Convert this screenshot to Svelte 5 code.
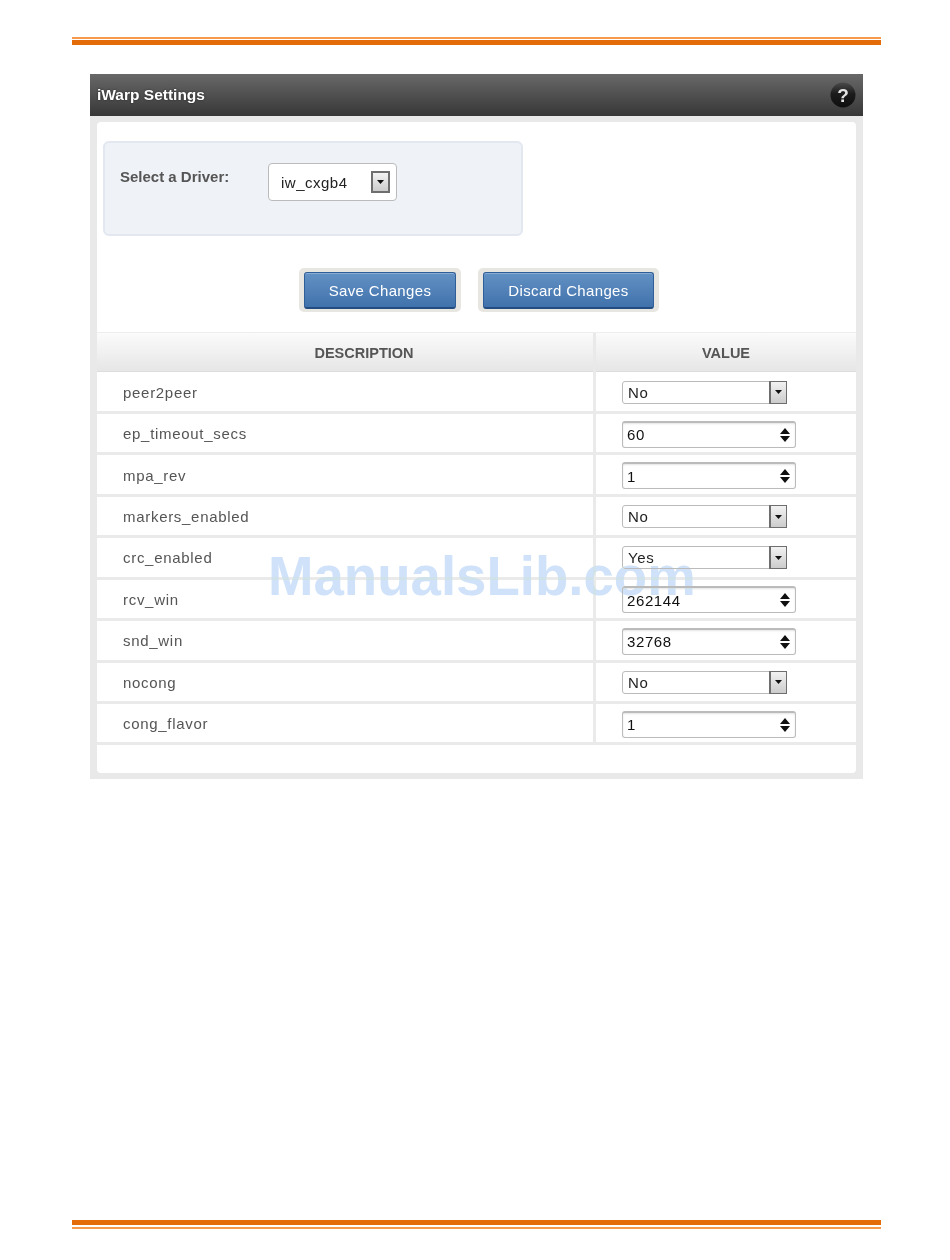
<script>
  const rows = [
    { name: 'peer2peer', kind: 'select', value: 'No' },
    { name: 'ep_timeout_secs', kind: 'number', value: '60' },
    { name: 'mpa_rev', kind: 'number', value: '1' },
    { name: 'markers_enabled', kind: 'select', value: 'No' },
    { name: 'crc_enabled', kind: 'select', value: 'Yes' },
    { name: 'rcv_win', kind: 'number', value: '262144' },
    { name: 'snd_win', kind: 'number', value: '32768' },
    { name: 'nocong', kind: 'select', value: 'No' },
    { name: 'cong_flavor', kind: 'number', value: '1' }
  ];
</script>

<div class="page">
  <div class="bar-top"><div class="thin"></div><div class="thick"></div></div>

  <section class="panel">
    <header class="head">
      <h1>iWarp Settings</h1>
      <svg class="help" width="26" height="26" viewBox="0 0 26 26" aria-label="Help">
        <defs>
          <linearGradient id="helpfill" x1="0" y1="0" x2="0" y2="1">
            <stop offset="0" stop-color="#4a4a4a" />
            <stop offset="0.45" stop-color="#1c1c1c" />
            <stop offset="1" stop-color="#0e0e0e" />
          </linearGradient>
        </defs>
        <circle cx="13" cy="13" r="12.5" fill="url(#helpfill)" />
        <text x="13" y="20" text-anchor="middle" class="q">?</text>
      </svg>
    </header>

    <div class="inner">
      <div class="driver">
        <span class="driver-label">Select a Driver:</span>
        <div class="driver-select">
          <span>iw_cxgb4</span>
          <span class="drop big"><svg width="7" height="4" viewBox="0 0 7 4"><path d="M0 0h7L3.5 4z" fill="#111" /></svg></span>
        </div>
      </div>

      <div class="actions">
        <div class="btn-wrap"><button class="btn save">Save Changes</button></div>
        <div class="btn-wrap"><button class="btn discard">Discard Changes</button></div>
      </div>

      <div class="thead">
        <div class="th desc">DESCRIPTION</div>
        <div class="th val">VALUE</div>
      </div>

      {#each rows as r}
        <div class="row">
          <div class="name">{r.name}</div>
          <div class="cell">
            {#if r.kind === 'select'}
              <div class="sel">
                <span>{r.value}</span>
                <span class="drop"><svg width="7" height="4" viewBox="0 0 7 4"><path d="M0 0h7L3.5 4z" fill="#111" /></svg></span>
              </div>
            {:else}
              <div class="num">
                <span>{r.value}</span>
                <svg width="10" height="14" viewBox="0 0 10 14"><path d="M5 0l5 6H0zM0 8h10l-5 6z" fill="#111" /></svg>
              </div>
            {/if}
          </div>
        </div>
      {/each}
    </div>
  </section>

  <div class="spacer"></div>
  <div class="bar-bottom"><div class="thick"></div><div class="thin"></div></div>

  <div class="watermark">ManualsLib.com</div>
</div>

<style>
  :global(body) { margin: 0; background: #fff; }
  .page {
    position: relative;
    box-sizing: border-box;
    width: 950px;
    height: 1260px;
    padding: 37px 69px 31px 72px;
    display: flex;
    flex-direction: column;
    font-family: "Liberation Sans", Arial, sans-serif;
  }
  .thin { height: 2px; background: #f59a4a; }
  .thick { height: 5px; background: #e36c09; }
  .bar-top .thin { margin-bottom: 1px; }
  .bar-bottom .thin { margin-top: 2px; }
  .spacer { flex: 1; }

  .panel {
    margin: 29px 18px 0;
    background: #e9e9e9;
    padding-bottom: 6px;
  }
  .head {
    height: 42px;
    background: linear-gradient(#686868, #373737);
    display: flex;
    align-items: center;
    justify-content: space-between;
    padding: 0 7px;
  }
  h1 {
    margin: 0;
    font-size: 15.5px;
    font-weight: 700;
    color: #fff;
    text-shadow: 0 0 2px #222;
  }
  .help { margin-top: -1px; }
  .q { font: 700 19px "Liberation Sans", sans-serif; fill: #e4e4e4; }

  .inner {
    margin: 6px 7px 0;
    background: #fff;
    border-radius: 4px;
    height: 651px;
    padding-top: 19px;
    box-sizing: border-box;
  }
  .driver {
    box-sizing: border-box;
    width: 420px;
    height: 95px;
    margin-left: 6px;
    background: #eff2f7;
    border: 2px solid #e2e7f0;
    border-radius: 6px;
    display: flex;
    align-items: flex-start;
    padding: 20px 0 0 15px;
  }
  .driver-label {
    width: 148px;
    font-size: 15px;
    font-weight: 700;
    color: #555;
    line-height: 28px;
  }
  .driver-select {
    box-sizing: border-box;
    width: 129px;
    height: 38px;
    background: #fff;
    border: 1px solid #bbb;
    border-radius: 4px;
    display: flex;
    align-items: center;
    justify-content: space-between;
    padding: 0 6px 0 12px;
    font-size: 15px;
    letter-spacing: 0.5px;
    color: #222;
  }
  .drop {
    box-sizing: border-box;
    width: 19px;
    height: 22px;
    background: linear-gradient(#f2f2f2, #ccc);
    border: 2px solid #6e6e6e;
    display: flex;
    align-items: center;
    justify-content: center;
  }

  .actions {
    display: flex;
    justify-content: center;
    gap: 17px;
    padding-left: 5px;
    margin-top: 32px;
  }
  .btn-wrap {
    background: #e8e6e1;
    border-radius: 5px;
    padding: 4px 5px 3px;
  }
  .btn {
    display: block;
    height: 37px;
    border: 1px solid #2f5f99;
    border-bottom: 2px solid #234c80;
    border-radius: 3px;
    background: linear-gradient(#6291c4, #4172ab);
    box-shadow: inset 0 1px 0 rgba(255, 255, 255, 0.25);
    color: #fff;
    font: 15px "Liberation Sans", sans-serif;
    letter-spacing: 0.35px;
    padding: 1px 0 0;
  }
  .save { width: 152px; }
  .discard { width: 171px; }

  .thead {
    display: grid;
    grid-template-columns: 496px 3px 1fr;
    height: 40px;
    margin: 20px 0 0.5px;
    box-sizing: border-box;
    background: linear-gradient(#fbfbfb, #e6e6e6);
    border-top: 1px solid #eee;
    border-bottom: 1px solid #ddd;
  }
  .th {
    font-size: 14.5px;
    font-weight: 700;
    color: #555;
    line-height: 40px;
    text-align: center;
  }
  .desc { grid-column: 1; padding-left: 38px; }
  .val { grid-column: 3; box-shadow: -3px 0 0 #e9e9e9; }

  .row {
    display: grid;
    grid-template-columns: 496px 1fr;
    height: 41.44px;
    box-sizing: border-box;
    border-bottom: 3px solid #eaeaea;
    align-items: center;
  }
  .name {
    padding-left: 26px;
    font-size: 15px;
    letter-spacing: 0.7px;
    color: #555;
    padding-top: 1px;
  }
  .cell {
    box-sizing: border-box;
    height: 100%;
    border-left: 3px solid #eaeaea;
    padding: 1px 0 0 26px;
    display: flex;
    align-items: center;
  }
  .sel {
    box-sizing: border-box;
    width: 165px;
    height: 23px;
    background: #fff;
    border: 1px solid #bbb;
    border-radius: 3px;
    display: flex;
    align-items: center;
    justify-content: space-between;
    padding-left: 5px;
    font-size: 15px;
    letter-spacing: 0.6px;
    color: #222;
  }
  .sel .drop { width: 18px; height: 23px; margin-right: -1px; border-width: 1px 1px 1px 2px; }
  .num {
    box-sizing: border-box;
    width: 174px;
    height: 27px;
    margin-top: 1px;
    background: #fff;
    border: 1px solid #bbb;
    border-top: 2px solid #bbb;
    border-radius: 3px;
    box-shadow: inset 0 1px 2px #e4e4e4;
    display: flex;
    align-items: center;
    justify-content: space-between;
    padding: 0 5px 0 4px;
    font-size: 15px;
    letter-spacing: 0.6px;
    color: #111;
  }

  .watermark {
    position: absolute;
    left: 268px;
    top: 546px;
    font-size: 54.6px;
    line-height: 62px;
    font-weight: 700;
    color: #cfe2fa;
    mix-blend-mode: darken;
    pointer-events: none;
  }
</style>
